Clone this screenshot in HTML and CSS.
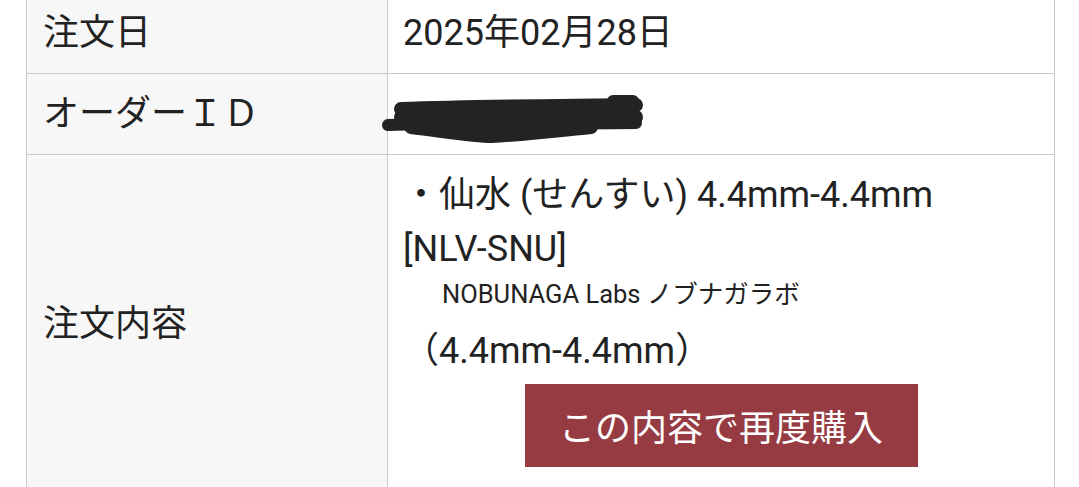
FILE: index.html
```html
<!DOCTYPE html>
<html lang="ja">
<head>
<meta charset="utf-8">
<title>注文詳細</title>
<link rel="stylesheet" href="styles.css">
</head>
<body>
<div class="order">
  <table class="order-table">
    <tr>
      <th>注文日</th>
      <td>2025年02月28日</td>
    </tr>
    <tr>
      <th>オーダーＩＤ</th>
      <td>
        <svg class="redacted" width="270" height="54" viewBox="0 0 270 54" aria-hidden="true">
          <g fill="none" stroke="#232323" stroke-linecap="round" stroke-linejoin="round">
            <path d="M20 22 C100 19 180 19 255 18" stroke-width="14"/>
            <path d="M232 14 L252 14" stroke-width="12"/>
            <path d="M20 30 L255 30" stroke-width="14"/>
            <path d="M7 38 C60 36 150 37 255 36" stroke-width="12"/>
            <path d="M30 40 C70 45 95 49 110 49 C150 47 180 43 210 40" stroke-width="14"/>
          </g>
        </svg>
      </td>
    </tr>
    <tr>
      <th>注文内容</th>
      <td class="content-cell">
        <p class="item-name">・仙水 (せんすい) 4.4mm-4.4mm<br>[NLV-SNU]</p>
        <p class="item-maker">NOBUNAGA Labs ノブナガラボ</p>
        <p class="item-option">（4.4mm-4.4mm）</p>
        <div class="actions">
          <button class="rebuy" type="button">この内容で再度購入</button>
        </div>
      </td>
    </tr>
  </table>
</div>
</body>
</html>
```

FILE: styles.css
```css
html, body {
  margin: 0;
  padding: 0;
  background: #ffffff;
}

body {
  font-family: Roboto, "Noto Sans CJK JP", sans-serif;
  color: #222222;
}

.order {
  margin: -8px 24px 0 26px;
}

.order-table {
  width: 100%;
  border-collapse: collapse;
  table-layout: fixed;
  font-size: 36px;
  line-height: 54px;
}

.order-table th,
.order-table td {
  border: 1px solid #c9c9c9;
  padding: 13px 15px;
  vertical-align: middle;
  text-align: left;
  font-weight: 400;
}

.order-table th {
  width: 329px;
  background: #f7f7f7;
  padding-left: 16px;
}

.order-table td {
  background: #ffffff;
}

.order-table .content-cell {
  padding-bottom: 26px;
}

.redacted {
  display: block;
  overflow: visible;
  margin-left: -22px;
}

.item-name,
.item-maker,
.item-option {
  margin: 0;
}

.item-maker {
  font-size: 25.5px;
  line-height: 36px;
  padding-left: 39px;
  margin-bottom: 12px;
}

.actions {
  display: flex;
  justify-content: center;
  padding-top: 6px;
}

.rebuy {
  font-family: "Noto Sans CJK JP", sans-serif;
  font-size: 36px;
  line-height: 45px;
  color: #ffffff;
  background: #973b43;
  border: none;
  border-radius: 0;
  width: 393px;
  height: 83px;
  padding: 0;
}
```
